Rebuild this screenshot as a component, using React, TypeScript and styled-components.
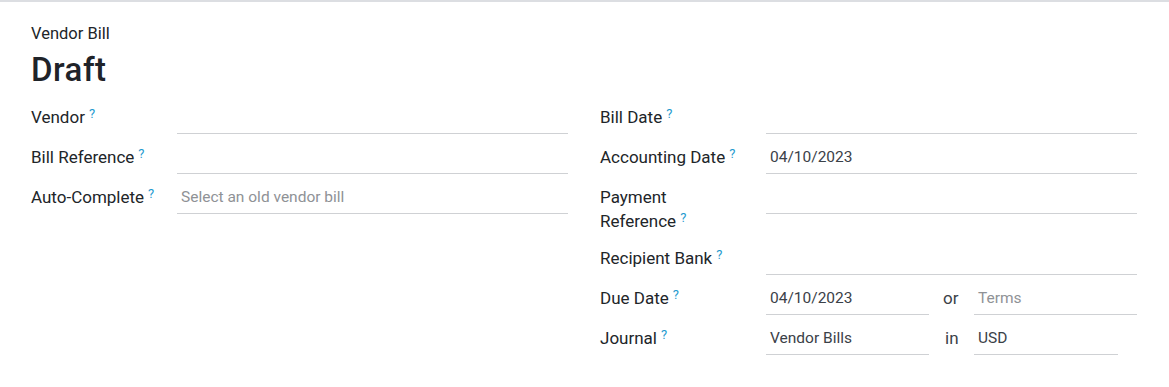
import React from "react";
import styled, { createGlobalStyle } from "styled-components";

const Global = createGlobalStyle`
  html, body { margin: 0; padding: 0; background: #ffffff; }
  body { font-family: Roboto, "Liberation Sans", sans-serif; color: #212529; }
  * { box-sizing: border-box; }
`;

const Sheet = styled.div`
  width: 1169px;
  height: 387px;
  border-top: 2px solid #dcdee2;
  padding: 22px 32px 0 31px;
  background: #fff;
`;

const Subtitle = styled.div`
  font-size: 16.5px;
  line-height: 20px;
  color: #212529;
`;

const Title = styled.h1`
  margin: 6px 0 0 0;
  font-size: 33px;
  line-height: 40px;
  font-weight: 500;
  letter-spacing: 0.5px;
  color: #1f2329;
`;

const Columns = styled.div`
  display: grid;
  grid-template-columns: 1fr 1fr;
  column-gap: 32px;
  margin-top: 15px;
`;

const Column = styled.div`
  display: flex;
  flex-direction: column;
`;

const Row = styled.div<{ $label: number }>`
  display: grid;
  grid-template-columns: ${(p) => p.$label}px 1fr;
  align-items: start;
  margin-bottom: 11px;
`;

const Label = styled.label`
  font-size: 17px;
  line-height: 24px;
  padding-bottom: 2px;
  color: #212529;
  padding-right: 8px;
`;

const Help = styled.sup`
  color: #1f9bcf;
  font-size: 13px;
  margin-left: 4px;
  vertical-align: top;
  position: relative;
  top: -3px;
`;

const FieldLine = styled.div`
  display: flex;
  align-items: flex-start;
`;

const Input = styled.div<{ $width?: number; $placeholder?: boolean }>`
  ${(p) => (p.$width ? `width: ${p.$width}px; flex: none;` : "flex: 1;")}
  height: 29px;
  padding: 2px 4px 6px 4px;
  font-size: 15.5px;
  line-height: 20px;
  color: ${(p) => (p.$placeholder ? "#8f9296" : "#3b4148")};
  border-bottom: 1px solid #cfd1d4;
  white-space: nowrap;
`;

const Joiner = styled.span<{ $pad: number }>`
  width: 45px;
  flex: none;
  padding-left: ${(p) => p.$pad}px;
  font-size: 17px;
  line-height: 24px;
  color: #3b4148;
`;

const Spacer = styled.div`
  flex: 1;
`;

type Field = {
  label: React.ReactNode;
  children?: React.ReactNode;
};

const FormRow = ({ label, children, width }: Field & { width: number }) => (
  <Row $label={width}>
    <Label>
      {label}
      <Help>?</Help>
    </Label>
    <FieldLine>{children ?? <Input />}</FieldLine>
  </Row>
);

export default function App() {
  return (
    <>
      <Global />
      <Sheet>
        <Subtitle>Vendor Bill</Subtitle>
        <Title>Draft</Title>
        <Columns>
          <Column>
            <FormRow label="Vendor" width={146} />
            <FormRow label="Bill Reference" width={146} />
            <FormRow label="Auto-Complete" width={146}>
              <Input $placeholder>Select an old vendor bill</Input>
            </FormRow>
          </Column>
          <Column>
            <FormRow label="Bill Date" width={166} />
            <FormRow label="Accounting Date" width={166}>
              <Input>04/10/2023</Input>
            </FormRow>
            <FormRow
              label={
                <>
                  Payment
                  <br />
                  Reference
                </>
              }
              width={166}
            />
            <FormRow label="Recipient Bank" width={166} />
            <FormRow label="Due Date" width={166}>
              <Input $width={163}>04/10/2023</Input>
              <Joiner $pad={14}>or</Joiner>
              <Input $width={163} $placeholder>
                Terms
              </Input>
            </FormRow>
            <FormRow label="Journal" width={166}>
              <Input $width={163}>Vendor Bills</Input>
              <Joiner $pad={16}>in</Joiner>
              <Input $width={144}>USD</Input>
              <Spacer />
            </FormRow>
          </Column>
        </Columns>
      </Sheet>
    </>
  );
}
